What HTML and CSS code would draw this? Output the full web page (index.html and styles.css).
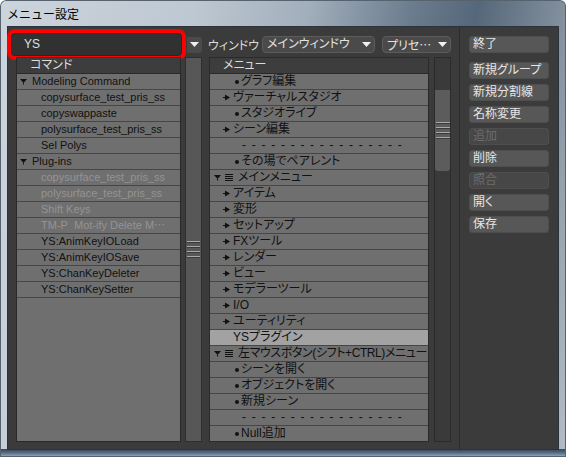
FILE: index.html
```html
<!DOCTYPE html>
<html lang="ja">
<head>
<meta charset="utf-8">
<title>メニュー設定</title>
<link rel="stylesheet" href="styles.css">
</head>
<body>
<div class="window">
  <div class="titlebar">メニュー設定</div>
  <div class="client">
    <div class="main">
      <div class="toolbar">
        <div class="search">YS</div>
        <div class="drop-btn"><svg width="9" height="5" viewBox="0 0 9 5"><path d="M0 0H9L4.5 5Z" fill="#f0f0f0"/></svg></div>
        <span class="label">ウィンドウ</span>
        <div class="select select-window"><span>メインウィンドウ</span><svg width="9" height="5" viewBox="0 0 9 5"><path d="M0 0H9L4.5 5Z" fill="#f0f0f0"/></svg></div>
        <div class="select select-preset"><span class="cjk">プリセ…</span><svg width="9" height="5" viewBox="0 0 9 5"><path d="M0 0H9L4.5 5Z" fill="#f0f0f0"/></svg></div>
      </div>
      <div class="panes">
        <div class="list list-cmd">
          <div class="head">コマンド</div>
          <div class="row node"><svg class="tw" width="7" height="7" viewBox="0 0 7 7"><path d="M0 1H7L3.5 5Z" fill="#111"/><rect x="3" y="5" width="1" height="1.5" fill="#111"/></svg>Modeling Command</div>
          <div class="row child">copysurface_test_pris_ss</div>
          <div class="row child">copyswappaste</div>
          <div class="row child">polysurface_test_pris_ss</div>
          <div class="row child">Sel Polys</div>
          <div class="row node"><svg class="tw" width="7" height="7" viewBox="0 0 7 7"><path d="M0 1H7L3.5 5Z" fill="#111"/><rect x="3" y="5" width="1" height="1.5" fill="#111"/></svg>Plug-ins</div>
          <div class="row child dis">copysurface_test_pris_ss</div>
          <div class="row child dis">polysurface_test_pris_ss</div>
          <div class="row child dis">Shift Keys</div>
          <div class="row child dis">TM-P&nbsp;&nbsp;Mot-ify Delete M⋯</div>
          <div class="row child">YS:AnimKeyIOLoad</div>
          <div class="row child">YS:AnimKeyIOSave</div>
          <div class="row child">YS:ChanKeyDeleter</div>
          <div class="row child">YS:ChanKeySetter</div>
        </div>
        <div class="splitter"><div class="grip"><i></i><i></i><i></i><i></i></div></div>
        <div class="list list-menu">
          <div class="head">メニュー</div>
          <div class="row leaf"><span class="dot"></span>グラフ編集</div>
          <div class="row branch"><svg class="ar" width="8" height="7" viewBox="0 0 8 7"><path d="M2 0.5L7 3.5L2 6.5Z" fill="#111"/><rect x="0" y="3" width="2" height="1" fill="#111"/></svg>ヴァーチャルスタジオ</div>
          <div class="row leaf"><span class="dot"></span>スタジオライブ</div>
          <div class="row branch"><svg class="ar" width="8" height="7" viewBox="0 0 8 7"><path d="M2 0.5L7 3.5L2 6.5Z" fill="#111"/><rect x="0" y="3" width="2" height="1" fill="#111"/></svg>シーン編集</div>
          <div class="row sep">- - - - - - - - - - - - - - - - -</div>
          <div class="row leaf"><span class="dot"></span>その場でペアレント</div>
          <div class="row node"><svg class="tw" width="7" height="7" viewBox="0 0 7 7"><path d="M0 1H7L3.5 5Z" fill="#111"/><rect x="3" y="5" width="1" height="1.5" fill="#111"/></svg><svg class="mi" width="8" height="8" viewBox="0 0 8 8"><rect x="0" y="0" width="8" height="1" fill="#111"/><rect x="0" y="2" width="8" height="1" fill="#111"/><rect x="0" y="4" width="8" height="1" fill="#111"/><rect x="0" y="6" width="8" height="1" fill="#111"/></svg>メインメニュー</div>
          <div class="row branch"><svg class="ar" width="8" height="7" viewBox="0 0 8 7"><path d="M2 0.5L7 3.5L2 6.5Z" fill="#111"/><rect x="0" y="3" width="2" height="1" fill="#111"/></svg>アイテム</div>
          <div class="row branch"><svg class="ar" width="8" height="7" viewBox="0 0 8 7"><path d="M2 0.5L7 3.5L2 6.5Z" fill="#111"/><rect x="0" y="3" width="2" height="1" fill="#111"/></svg>変形</div>
          <div class="row branch"><svg class="ar" width="8" height="7" viewBox="0 0 8 7"><path d="M2 0.5L7 3.5L2 6.5Z" fill="#111"/><rect x="0" y="3" width="2" height="1" fill="#111"/></svg>セットアップ</div>
          <div class="row branch"><svg class="ar" width="8" height="7" viewBox="0 0 8 7"><path d="M2 0.5L7 3.5L2 6.5Z" fill="#111"/><rect x="0" y="3" width="2" height="1" fill="#111"/></svg>FXツール</div>
          <div class="row branch"><svg class="ar" width="8" height="7" viewBox="0 0 8 7"><path d="M2 0.5L7 3.5L2 6.5Z" fill="#111"/><rect x="0" y="3" width="2" height="1" fill="#111"/></svg>レンダー</div>
          <div class="row branch"><svg class="ar" width="8" height="7" viewBox="0 0 8 7"><path d="M2 0.5L7 3.5L2 6.5Z" fill="#111"/><rect x="0" y="3" width="2" height="1" fill="#111"/></svg>ビュー</div>
          <div class="row branch"><svg class="ar" width="8" height="7" viewBox="0 0 8 7"><path d="M2 0.5L7 3.5L2 6.5Z" fill="#111"/><rect x="0" y="3" width="2" height="1" fill="#111"/></svg>モデラーツール</div>
          <div class="row branch"><svg class="ar" width="8" height="7" viewBox="0 0 8 7"><path d="M2 0.5L7 3.5L2 6.5Z" fill="#111"/><rect x="0" y="3" width="2" height="1" fill="#111"/></svg>I/O</div>
          <div class="row branch"><svg class="ar" width="8" height="7" viewBox="0 0 8 7"><path d="M2 0.5L7 3.5L2 6.5Z" fill="#111"/><rect x="0" y="3" width="2" height="1" fill="#111"/></svg>ユーティリティ</div>
          <div class="row plain sel">YSプラグイン</div>
          <div class="row node long"><svg class="tw" width="7" height="7" viewBox="0 0 7 7"><path d="M0 1H7L3.5 5Z" fill="#111"/><rect x="3" y="5" width="1" height="1.5" fill="#111"/></svg><svg class="mi" width="8" height="8" viewBox="0 0 8 8"><rect x="0" y="0" width="8" height="1" fill="#111"/><rect x="0" y="2" width="8" height="1" fill="#111"/><rect x="0" y="4" width="8" height="1" fill="#111"/><rect x="0" y="6" width="8" height="1" fill="#111"/></svg><span class="txt">左マウスボタン(シフト+CTRL)メニュー</span></div>
          <div class="row leaf"><span class="dot"></span>シーンを開く</div>
          <div class="row leaf"><span class="dot"></span>オブジェクトを開く</div>
          <div class="row leaf"><span class="dot"></span>新規シーン</div>
          <div class="row sep">- - - - - - - - - - - - - - - - -</div>
          <div class="row leaf"><span class="dot"></span>Null追加</div>
        </div>
        <div class="scrollbar"><div class="thumb"><div class="grip"><i></i><i></i><i></i><i></i></div></div></div>
      </div>
    </div>
    <div class="side">
      <div class="btn first">終了</div>
      <div class="btn">新規グループ</div>
      <div class="btn">新規分割線</div>
      <div class="btn">名称変更</div>
      <div class="btn off">追加</div>
      <div class="btn">削除</div>
      <div class="btn off">照合</div>
      <div class="btn">開く</div>
      <div class="btn">保存</div>
    </div>
  </div>
</div>
</body>
</html>
```
FILE: styles.css
```css
* { box-sizing: border-box; }
html, body { margin: 0; padding: 0; background: #ffffff; }
body {
  font-family: "Liberation Sans", "Noto Sans CJK JP", sans-serif;
  font-size: 12px;
  font-feature-settings: "palt";
}
.window {
  width: 566px;
  height: 457px;
  border-radius: 6px 6px 0 0;
  padding: 0 8px 8px 8px;
  display: flex;
  flex-direction: column;
  background:
    linear-gradient(to bottom, rgba(0,0,0,0) 449px, #34475b 449px, #4d6277 452px, #7890a6 455px, #a4b3c1 457px),
    linear-gradient(100deg, #ccd4dc 0%, #bec8d2 30%, #a1aebb 48%, #6b7c8e 64%, #55677a 74%, #7d8b99 86%, #b5bec7 100%);
  box-shadow: inset 0 0 0 1px #56626e;
}
.titlebar {
  height: 27px;
  line-height: 27px;
  margin-left: -1px;
  color: #000;
  font-family: "Noto Sans CJK JP", sans-serif;
  font-feature-settings: normal;
  font-size: 12px;
}
.client {
  flex: 1;
  display: flex;
  background: #3b3b3b;
  box-shadow: 0 0 0 1px #2a333c;
}
.main {
  width: 451px;
  display: flex;
  flex-direction: column;
}
.toolbar {
  height: 30px;
  display: flex;
  align-items: center;
  padding: 5px 0 0 3px;
  color: #dcdcdc;
}
.search {
  width: 171px;
  height: 23px;
  background: #313131;
  border: 1px solid #272727;
  border-radius: 4px;
  outline: 4px solid #ff0000;
  color: #d4e2f0;
  padding-left: 12px;
  line-height: 21px;
}
.drop-btn {
  width: 15px;
  height: 16px;
  margin-left: 5px;
  background: #4a4a4a;
  border-radius: 0 3px 3px 0;
  display: flex;
  align-items: center;
  justify-content: center;
}
.label {
  margin-left: 6px;
  width: 54px;
  white-space: nowrap;
  color: #dcdcdc;
}
.select {
  height: 17px;
  background: #4a4a4a;
  border: 1px solid #5c5c5c;
  border-radius: 4px;
  display: flex;
  align-items: center;
  justify-content: space-between;
  padding: 0 3px 0 4px;
  color: #e2e2e2;
  white-space: nowrap;
  line-height: 15px;
}
.select-window { width: 113px; }
.select-preset { width: 69px; margin-left: 7px; }
.cjk { font-family: "Noto Sans CJK JP", sans-serif; }
.panes {
  height: 385px;
  display: flex;
  padding-left: 8px;
}
.list {
  border: 1px solid #2a2a2a;
  background: #6f6f6f;
  overflow: hidden;
}
.list-cmd { width: 165px; }
.list-menu { width: 220px; margin-left: 7px; }
.splitter {
  width: 17px;
  margin-left: 4px;
  background: #575757;
  border: 1px solid #2e2e2e;
  display: flex;
  align-items: center;
  justify-content: center;
}
.scrollbar {
  width: 17px;
  margin-left: 5px;
  background: #3a3a3a;
  border: 1px solid #2b2b2b;
  padding-top: 32px;
}
.thumb {
  height: 81px;
  background: #5c5c5c;
  border-radius: 0 0 3px 3px;
  display: flex;
  align-items: center;
  justify-content: center;
}
.grip {
  display: flex;
  flex-direction: column;
  gap: 3px;
}
.grip i {
  display: block;
  width: 13px;
  height: 2px;
  border-top: 1px solid #a8a8a8;
  border-bottom: 1px solid #3a3a3a;
}
.thumb .grip i { width: 14px; }
.head {
  height: 16px;
  border-bottom: 1px solid #2a2a2a;
  background: #3d3d3d;
  color: #dcdcdc;
  line-height: 15px;
  padding-left: 13px;
  white-space: nowrap;
}
.row {
  height: 16px;
  border-bottom: 1px solid #464646;
  display: flex;
  align-items: center;
  white-space: nowrap;
  overflow: hidden;
  line-height: 15px;
  color: #111;
}
.row svg, .row .dot { flex-shrink: 0; }
.list-cmd .row { font-size: 11px; }
.list-cmd .node { padding-left: 3px; }
.list-cmd .node .tw { margin-right: 5px; }
.list-cmd .child { padding-left: 24px; }
.dis { color: #949494; }
.list-menu .node { padding-left: 4px; }
.list-menu .node .tw { margin-right: 4px; }
.mi { margin-right: 5px; }
.long .txt { letter-spacing: -0.4px; }
.branch { padding-left: 13px; }
.ar { margin-right: 2px; }
.leaf { padding-left: 25px; }
.dot {
  width: 4px;
  height: 4px;
  border-radius: 50%;
  background: #111;
  margin-right: 2px;
}
.plain { padding-left: 23px; }
.sep { padding-left: 32px; letter-spacing: 1.2px; }
.sel { background: #a2a2a2; }
.side {
  flex: 1;
  border-left: 1px solid #2c2c2c;
  padding: 9px 0 0 9px;
  display: flex;
  flex-direction: column;
}
.btn {
  width: 80px;
  height: 17px;
  margin-bottom: 5px;
  background: #575757;
  border: 1px solid #4e4e4e;
  border-radius: 3px;
  color: #e6e6e6;
  padding-left: 3px;
  line-height: 15px;
  white-space: nowrap;
  overflow: hidden;
}
.btn.first { margin-bottom: 9px; }
.btn.off { background: #474747; color: #6c6c6c; }
```
